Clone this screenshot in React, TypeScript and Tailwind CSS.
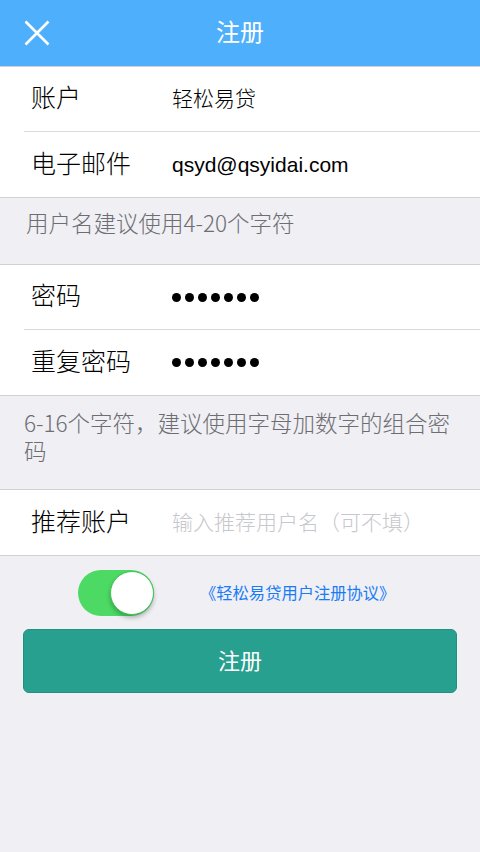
import React, { useState } from "react";

const font = { fontFamily: '"Helvetica Neue", "Liberation Sans", "Noto Sans CJK SC", sans-serif' };
const cjkFirst = { fontFamily: '"Noto Sans CJK SC", "Liberation Sans", sans-serif' };

const Dots = () => (
  <div className="flex gap-[4px]">
    {[0, 1, 2, 3, 4, 5, 6].map((i) => (
      <span key={i} className="w-[9px] h-[9px] rounded-full bg-black" />
    ))}
  </div>
);

const Row = ({
  label,
  children,
  last,
}: {
  label: string;
  children: React.ReactNode;
  last?: boolean;
}) => (
  <div className="pl-6 bg-white">
    <div
      className={`h-[65px] flex items-center ${
        last ? "" : "border-b border-[#d9d9dd]"
      }`}
    >
      <span className="w-[148px] pl-[7px] text-[25px] font-light text-black">{label}</span>
      <div className="flex-1 text-[21px] font-light text-black">{children}</div>
    </div>
  </div>
);

const Group = ({ children }: { children: React.ReactNode }) => (
  <div className="border-y border-[#d0d0d4] bg-white">{children}</div>
);

const App = () => {
  const [agree, setAgree] = useState(true);

  return (
    <div className="w-[480px] h-[852px] bg-[#efeff4] flex flex-col" style={font}>
      <div className="h-[66px] bg-[#4eb0fc] flex items-center relative shrink-0">
        <button className="ml-6 w-[26px] h-[26px]">
          <svg viewBox="0 0 26 26" width="26" height="26">
            <path d="M1.5 1.5 L24.5 24.5 M24.5 1.5 L1.5 24.5" stroke="#fff" strokeWidth="2.6" fill="none" />
          </svg>
        </button>
        <span className="absolute left-0 right-0 text-center text-[24px] text-white pointer-events-none">
          注册
        </span>
      </div>

      <Group>
        <Row label="账户">轻松易贷</Row>
        <Row label="电子邮件" last>
          qsyd@qsyidai.com
        </Row>
      </Group>

      <div
        className="h-[66px] px-[26px] pt-[10px] text-[22.5px] leading-[28px] font-light text-[#6d6d72]"
        style={cjkFirst}
      >
        用户名建议使用4-20个字符
      </div>

      <Group>
        <Row label="密码">
          <Dots />
        </Row>
        <Row label="重复密码" last>
          <Dots />
        </Row>
      </Group>

      <div
        className="h-[93px] px-6 pt-[12px] text-[22.5px] leading-[28px] font-light text-[#6d6d72]"
        style={cjkFirst}
      >
        6-16个字符，建议使用字母加数字的组合密码
      </div>

      <Group>
        <Row label="推荐账户" last>
          <span className="text-[#c7c7cd]">输入推荐用户名（可不填）</span>
        </Row>
      </Group>

      <div className="flex items-center h-[74px]">
        <button
          onClick={() => setAgree(!agree)}
          className={`ml-[78px] w-[76px] h-[46px] rounded-full relative ${
            agree ? "bg-[#4cd964]" : "bg-[#e5e5ea]"
          }`}
        >
          <span
            className={`absolute top-[1px] w-[44px] h-[44px] rounded-full bg-white border border-[#3fc455] shadow-[0_3px_4px_rgba(0,0,0,0.25)] ${
              agree ? "right-0" : "left-0"
            }`}
          />
        </button>
        <a className="ml-[46px] text-[16.3px] text-[#1a7cf5]">《轻松易贷用户注册协议》</a>
      </div>

      <div className="px-[23px] -mt-px">
        <button className="w-full h-[64px] rounded-[6px] bg-[#28a08f] border border-[#23907f] text-white text-[22px]">
          注册
        </button>
      </div>
    </div>
  );
};

export default App;
